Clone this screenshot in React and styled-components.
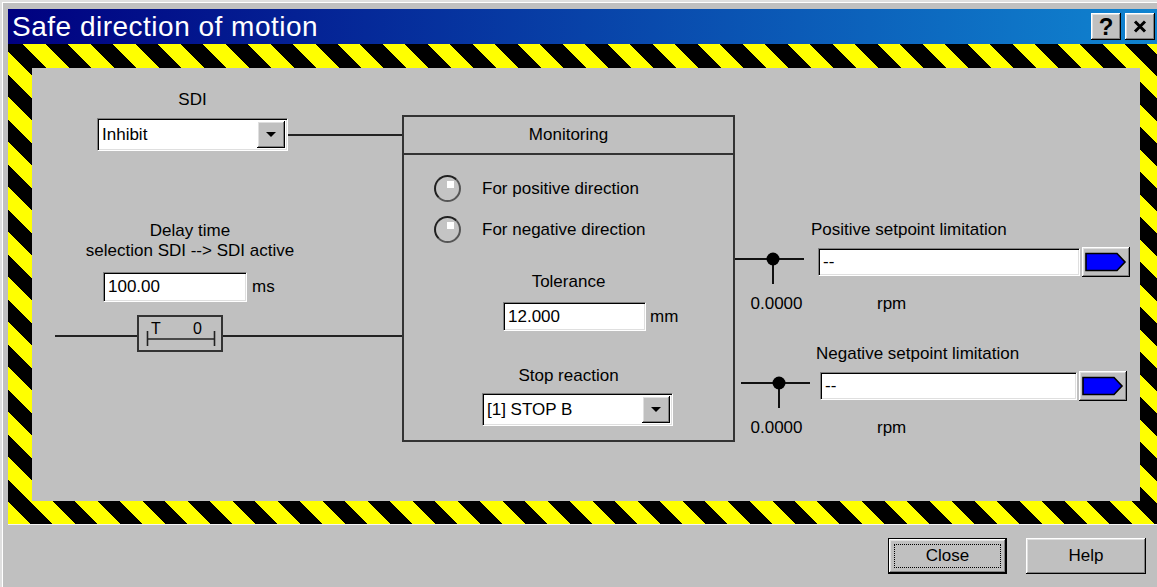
import React from "react";
import styled, { createGlobalStyle } from "styled-components";

const GlobalStyle = createGlobalStyle`
    html, body {
        margin: 0;
        padding: 0;
        background: #c0c0c0;
    }
    body {
        font-family: "Liberation Sans", Arial, sans-serif;
        font-size: 17px;
        color: #000;
        overflow: hidden;
    }
`;

const raised = `
    box-shadow: inset -1px -1px #000, inset 1px 1px #fff,
        inset -2px -2px #808080, inset 2px 2px #dfdfdf;
`;

const Window = styled.div`
    width: 1157px;
    height: 587px;
    box-sizing: border-box;
    padding: 9px 0 0 8px;
    background: #c0c0c0;
    box-shadow: inset 2px 2px #dfdfdf, inset 3px 3px #fff;
    display: flex;
    flex-direction: column;
`;

const TitleBar = styled.div`
    height: 35px;
    flex: none;
    display: flex;
    align-items: center;
    justify-content: space-between;
    padding: 0 2px 0 4px;
    background: linear-gradient(90deg, #000080 0%, #1084d0 100%);
`;

const TitleText = styled.span`
    color: #fff;
    font-size: 28px;
    letter-spacing: 0.5px;
    white-space: nowrap;
`;

const TitleButtons = styled.div`
    display: flex;
    gap: 4px;
`;

const CaptionButton = styled.button`
    width: 30px;
    height: 27px;
    padding: 0;
    border: none;
    background: #c0c0c0;
    ${raised}
    display: flex;
    align-items: center;
    justify-content: center;
    font: bold 24px "Liberation Sans", Arial, sans-serif;
    color: #000;
`;

const HazardFrame = styled.div`
    height: 480px;
    flex: none;
    box-sizing: border-box;
    padding: 24px 17px 23px 24px;
    background: repeating-linear-gradient(45deg, #ffff00 0 15.9px, #000 15.9px 31.8px);
`;

const Panel = styled.div`
    height: 100%;
    background: #c0c0c0;
    display: flex;
    align-items: flex-start;
`;

const LeftColumn = styled.div`
    width: 370px;
    flex: none;
    display: flex;
    flex-direction: column;
`;

const Caption = styled.div`
    line-height: 20px;
    text-align: center;
    white-space: nowrap;
    width: ${p => (p.$w ? `${p.$w}px` : "auto")};
    margin: ${p => p.$m || "0"};
`;

const WiredRow = styled.div`
    display: flex;
    align-items: center;
    margin-top: ${p => p.$mt || 0}px;
`;

const Wire = styled.div`
    height: 2px;
    background: #222;
    flex: ${p => (p.$w ? "none" : "1")};
    width: ${p => (p.$w ? `${p.$w}px` : "auto")};
    margin-left: ${p => p.$ml || 0}px;
    margin-top: ${p => p.$mt || 0}px;
`;

const FieldRow = styled.div`
    display: flex;
    align-items: center;
    gap: ${p => p.$gap || 0}px;
    margin: ${p => p.$m || "0"};
`;

const Sunken = styled.div`
    box-sizing: border-box;
    width: ${p => p.$w}px;
    height: ${p => p.$h || 33}px;
    margin-left: ${p => p.$ml || 0}px;
    background: #fff;
    border: 1px solid;
    border-color: #808080 #fff #fff #808080;
    box-shadow: inset 1px 1px #000, inset -1px -1px #dfdfdf;
    display: flex;
    align-items: center;
    flex: none;
`;

const FieldText = styled.span`
    flex: 1;
    padding-left: 4px;
    white-space: nowrap;
    overflow: hidden;
`;

const DropButton = styled.span`
    width: 28px;
    align-self: stretch;
    margin: 2px;
    background: #c0c0c0;
    ${raised}
    display: flex;
    align-items: center;
    justify-content: center;

    &::after {
        content: "";
        border-left: 5px solid transparent;
        border-right: 5px solid transparent;
        border-top: 5px solid #000;
    }
`;

const Unit = styled.span`
    margin: ${p => p.$m || "0 0 0 5px"};
    white-space: nowrap;
    line-height: 20px;
`;

const TimerBox = styled.div`
    width: 86px;
    height: 37px;
    box-sizing: border-box;
    border: 2px solid #333;
    position: relative;
    flex: none;
`;

const TimerLetters = styled.div`
    display: flex;
    justify-content: space-between;
    padding: 3px 19px 0 12px;
    line-height: 17px;
    font-size: 16px;
`;

const TimerBracket = styled.svg`
    position: absolute;
    left: 7px;
    top: 12px;
`;

const MonitorBox = styled.div`
    width: 333px;
    height: 327px;
    margin-top: 47px;
    flex: none;
    box-sizing: border-box;
    border: 2px solid #333;
    display: flex;
    flex-direction: column;
`;

const MonitorHeader = styled.div`
    height: 36px;
    border-bottom: 2px solid #333;
    display: flex;
    align-items: center;
    justify-content: center;
`;

const MonitorBody = styled.div`
    display: flex;
    flex-direction: column;
`;

const LampRow = styled.div`
    display: flex;
    align-items: center;
    gap: 21px;
    padding-left: 30px;
    margin-top: ${p => p.$mt}px;
`;

const Lamp = styled.span`
    width: 27px;
    height: 27px;
    box-sizing: border-box;
    border-radius: 50%;
    border: 2px solid;
    border-color: #202020 #555 #555 #202020;
    background: #c4c4c4;
    position: relative;
    flex: none;

    &::after {
        content: "";
        position: absolute;
        left: 11px;
        top: 4px;
        width: 7px;
        height: 7px;
        background: #fff;
    }
`;

const RightColumn = styled.div`
    flex: 1;
    display: flex;
    flex-direction: column;
`;

const SetpointBlock = styled.div`
    display: flex;
    flex-direction: column;
    margin-top: ${p => p.$mt}px;
`;

const SetpointTitle = styled.div`
    line-height: 20px;
    padding-left: ${p => p.$indent}px;
    white-space: nowrap;
`;

const SetpointBody = styled.div`
    display: flex;
    align-items: flex-start;
`;

const Junction = styled.div`
    width: 83px;
    flex: none;
    display: flex;
    flex-direction: column;
    align-items: center;
`;

const Reading = styled.span`
    line-height: 20px;
`;

const SetpointFields = styled.div`
    display: flex;
    flex-direction: column;
    margin-left: ${p => p.$ml}px;
`;

const ArrowButton = styled.button`
    width: 48px;
    height: 30px;
    padding: 0;
    border: none;
    background: #c0c0c0;
    ${raised}
    display: flex;
    align-items: center;
    justify-content: center;
`;

const Footer = styled.div`
    flex: 1;
    border-top: 1px solid #f4f4f4;
    display: flex;
    justify-content: flex-end;
    align-items: flex-start;
    gap: 19px;
    padding: 13px 11px 0 0;
`;

const DialogButton = styled.button`
    width: ${p => p.$w}px;
    height: 36px;
    padding: 0;
    box-sizing: border-box;
    background: #c0c0c0;
    border: ${p => (p.$default ? "1px solid #000" : "none")};
    ${raised}
    display: flex;
    align-items: stretch;
    font: 17px "Liberation Sans", Arial, sans-serif;
    color: #000;
`;

const ButtonLabel = styled.span`
    flex: 1;
    margin: ${p => (p.$focused ? "5px" : "0")};
    border: 1px dotted ${p => (p.$focused ? "#000" : "transparent")};
    display: flex;
    align-items: center;
    justify-content: center;
`;

const Combo = ({ w, ml, value }) => (
    <Sunken $w={w} $h={33} $ml={ml}>
        <FieldText>{value}</FieldText>
        <DropButton />
    </Sunken>
);

const Setpoint = ({ title, mt, lead, indent, fieldWidth, fieldGap }) => (
    <SetpointBlock $mt={mt}>
        <SetpointTitle $indent={indent}>{title}</SetpointTitle>
        <SetpointBody>
            <Junction>
                <svg width="83" height="54" viewBox="0 0 83 54">
                    <line x1={lead} y1="19" x2={lead + 69} y2="19" stroke="#111" strokeWidth="2" />
                    <line x1={lead + 38} y1="19" x2={lead + 38} y2="44" stroke="#111" strokeWidth="2" />
                    <circle cx={lead + 38} cy="19" r="6.5" fill="#000" />
                </svg>
                <Reading>0.0000</Reading>
            </Junction>
            <SetpointFields $ml={fieldGap}>
                <FieldRow $gap={2} $m="7px 0 0 0">
                    <Sunken $w={fieldWidth} $h={28}>
                        <FieldText>--</FieldText>
                    </Sunken>
                    <ArrowButton>
                        <svg width="42" height="20" viewBox="0 0 42 20">
                            <path d="M1 1.5 H32 L40 10 L32 18.5 H1 Z" fill="#0000ff" stroke="#000" strokeWidth="1.6" />
                        </svg>
                    </ArrowButton>
                </FieldRow>
                <Unit $m={`17px 0 0 ${59 - fieldGap}px`}>rpm</Unit>
            </SetpointFields>
        </SetpointBody>
    </SetpointBlock>
);

const App = () => (
    <>
        <GlobalStyle />
        <Window>
            <TitleBar>
                <TitleText>Safe direction of motion</TitleText>
                <TitleButtons>
                    <CaptionButton>?</CaptionButton>
                    <CaptionButton>
                        <svg width="14" height="13" viewBox="0 0 14 13">
                            <path d="M2 1.5 L12 11.5 M12 1.5 L2 11.5" stroke="#000" strokeWidth="3" />
                        </svg>
                    </CaptionButton>
                </TitleButtons>
            </TitleBar>

            <HazardFrame>
                <Panel>
                    <LeftColumn>
                        <Caption $w={191} $m="22px 0 0 65px">SDI</Caption>
                        <WiredRow $mt={8}>
                            <Combo w={191} ml={65} value="Inhibit" />
                            <Wire />
                        </WiredRow>

                        <Caption $w={316} $m="70px 0 0 0">
                            Delay time
                            <br />
                            selection SDI --&gt; SDI active
                        </Caption>
                        <FieldRow $m="11px 0 0 71px">
                            <Sunken $w={144} $h={30}>
                                <FieldText>100.00</FieldText>
                            </Sunken>
                            <Unit>ms</Unit>
                        </FieldRow>

                        <WiredRow $mt={13}>
                            <Wire $w={82} $ml={23} $mt={5} />
                            <TimerBox>
                                <TimerLetters>
                                    <span>T</span>
                                    <span>0</span>
                                </TimerLetters>
                                <TimerBracket width="70" height="18" viewBox="0 0 70 18">
                                    <path d="M1.5 2 V17 M68.5 2 V17 M1.5 10 H68.5" stroke="#222" strokeWidth="1.6" fill="none" />
                                </TimerBracket>
                            </TimerBox>
                            <Wire $mt={5} />
                        </WiredRow>
                    </LeftColumn>

                    <MonitorBox>
                        <MonitorHeader>Monitoring</MonitorHeader>
                        <MonitorBody>
                            <LampRow $mt={20}>
                                <Lamp />
                                <span>For positive direction</span>
                            </LampRow>
                            <LampRow $mt={14}>
                                <Lamp />
                                <span>For negative direction</span>
                            </LampRow>
                            <Caption $m="29px 0 0 0">Tolerance</Caption>
                            <FieldRow $m="10px 0 0 99px">
                                <Sunken $w={143} $h={29}>
                                    <FieldText>12.000</FieldText>
                                </Sunken>
                                <Unit $m="0 0 0 4px">mm</Unit>
                            </FieldRow>
                            <Caption $m="35px 0 0 0">Stop reaction</Caption>
                            <FieldRow $m="7px 0 0 78px">
                                <Combo w={191} value="[1] STOP B" />
                            </FieldRow>
                        </MonitorBody>
                    </MonitorBox>

                    <RightColumn>
                        <Setpoint
                            title="Positive setpoint limitation"
                            mt={152}
                            lead={0}
                            indent={76}
                            fieldWidth={262}
                            fieldGap={0}
                        />
                        <Setpoint
                            title="Negative setpoint limitation"
                            mt={30}
                            lead={6}
                            indent={81}
                            fieldWidth={257}
                            fieldGap={2}
                        />
                    </RightColumn>
                </Panel>
            </HazardFrame>

            <Footer>
                <DialogButton $w={119} $default>
                    <ButtonLabel $focused>Close</ButtonLabel>
                </DialogButton>
                <DialogButton $w={120}>
                    <ButtonLabel>Help</ButtonLabel>
                </DialogButton>
            </Footer>
        </Window>
    </>
);

export default App;
